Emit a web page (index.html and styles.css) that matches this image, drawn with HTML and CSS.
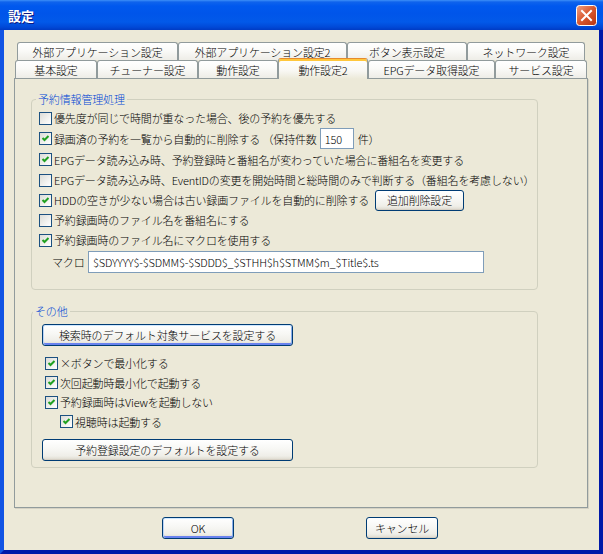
FILE: index.html
```html
<!DOCTYPE html>
<html lang="ja">
<head>
<meta charset="utf-8">
<title>設定</title>
<link rel="stylesheet" href="styles.css">
</head>
<body>
<div class="window">
  <div class="titlebar">
    <span class="title">設定</span>
    <span class="close">
      <svg width="21" height="21" viewBox="0 0 21 21">
        <defs>
          <linearGradient id="cg" x1="0" y1="0" x2="1" y2="1">
            <stop offset="0" stop-color="#f0a285"/>
            <stop offset="0.5" stop-color="#d9572e"/>
            <stop offset="1" stop-color="#b83410"/>
          </linearGradient>
        </defs>
        <rect x="0.5" y="0.5" width="20" height="20" rx="3" ry="3" fill="url(#cg)" stroke="#ffffff"/>
        <path d="M6 6 L15 15 M15 6 L6 15" stroke="#ffffff" stroke-width="2" stroke-linecap="square"/>
      </svg>
    </span>
  </div>
  <div class="client">
    <div class="tabs">
      <div class="tabrow back">
        <div class="tab w161">外部アプリケーション設定</div>
        <div class="tab w169">外部アプリケーション設定2</div>
        <div class="tab w120">ボタン表示設定</div>
        <div class="tab w118">ネットワーク設定</div>
      </div>
      <div class="tabrow front">
        <div class="tab w82">基本設定</div>
        <div class="tab w101">チューナー設定</div>
        <div class="tab w80">動作設定</div>
        <div class="tab w90 sel">動作設定2</div>
        <div class="tab w127">EPGデータ取得設定</div>
        <div class="tab w92">サービス設定</div>
      </div>
    </div>
    <div class="panel">
      <fieldset class="group g1">
        <legend>予約情報管理処理</legend>
        <div class="gbody b1">
          <div class="row"><span class="cb"></span><span>優先度が同じで時間が重なった場合、後の予約を優先する</span></div>
          <div class="row tall"><span class="cb on"><svg width="11" height="11" viewBox="0 0 11 11"><path d="M2.5 5 L4.5 7 L8.5 3" fill="none" stroke="#21a121" stroke-width="2"/></svg></span><span>録画済の予約を一覧から自動的に削除する （保持件数</span><span class="num">150</span><span>件）</span></div>
          <div class="row tall"><span class="cb on"><svg width="11" height="11" viewBox="0 0 11 11"><path d="M2.5 5 L4.5 7 L8.5 3" fill="none" stroke="#21a121" stroke-width="2"/></svg></span><span>EPGデータ読み込み時、予約登録時と番組名が変わっていた場合に番組名を変更する</span></div>
          <div class="row"><span class="cb"></span><span>EPGデータ読み込み時、EventIDの変更を開始時間と総時間のみで判断する（番組名を考慮しない）</span></div>
          <div class="row"><span class="cb on"><svg width="11" height="11" viewBox="0 0 11 11"><path d="M2.5 5 L4.5 7 L8.5 3" fill="none" stroke="#21a121" stroke-width="2"/></svg></span><span class="hddlabel">HDDの空きが少ない場合は古い録画ファイルを自動的に削除する</span><span class="btn b89">追加削除設定</span></div>
          <div class="row"><span class="cb"></span><span>予約録画時のファイル名を番組名にする</span></div>
          <div class="row"><span class="cb on"><svg width="11" height="11" viewBox="0 0 11 11"><path d="M2.5 5 L4.5 7 L8.5 3" fill="none" stroke="#21a121" stroke-width="2"/></svg></span><span>予約録画時のファイル名にマクロを使用する</span></div>
          <div class="macro"><span class="mlabel">マクロ</span><span class="text">$SDYYYY$-$SDMM$-$SDDD$_$STHH$h$STMM$m_$Title$.ts</span></div>
        </div>
      </fieldset>
      <fieldset class="group g2">
        <legend>その他</legend>
        <div class="gbody b2">
          <span class="btn wide focus">検索時のデフォルト対象サービスを設定する</span>
          <div class="rows2">
            <div class="row r20"><span class="cb on"><svg width="11" height="11" viewBox="0 0 11 11"><path d="M2.5 5 L4.5 7 L8.5 3" fill="none" stroke="#21a121" stroke-width="2"/></svg></span><span>×ボタンで最小化する</span></div>
            <div class="row r19"><span class="cb on"><svg width="11" height="11" viewBox="0 0 11 11"><path d="M2.5 5 L4.5 7 L8.5 3" fill="none" stroke="#21a121" stroke-width="2"/></svg></span><span>次回起動時最小化で起動する</span></div>
            <div class="row r20"><span class="cb on"><svg width="11" height="11" viewBox="0 0 11 11"><path d="M2.5 5 L4.5 7 L8.5 3" fill="none" stroke="#21a121" stroke-width="2"/></svg></span><span>予約録画時はViewを起動しない</span></div>
            <div class="row r19 indent"><span class="cb on"><svg width="11" height="11" viewBox="0 0 11 11"><path d="M2.5 5 L4.5 7 L8.5 3" fill="none" stroke="#21a121" stroke-width="2"/></svg></span><span>視聴時は起動する</span></div>
          </div>
          <span class="btn wide">予約登録設定のデフォルトを設定する</span>
        </div>
      </fieldset>
    </div>
    <div class="footer">
      <span class="btn b72 focus">OK</span>
      <span class="btn b72 cancel">キャンセル</span>
    </div>
  </div>
</div>
</body>
</html>
```

FILE: styles.css
```css
* { box-sizing: border-box; }
html, body { margin: 0; padding: 0; }
body {
  width: 603px;
  height: 554px;
  overflow: hidden;
  font-family: "Noto Sans CJK JP", "Noto Sans", sans-serif;
  font-size: 11px;
  font-weight: 300;
  letter-spacing: -0.15px;
  color: #000;
  background: #ffffff;
}
.window {
  width: 603px;
  height: 554px;
  display: flex;
  flex-direction: column;
  background: #0831d9;
}
.titlebar {
  height: 30px;
  flex: none;
  display: flex;
  align-items: center;
  justify-content: space-between;
  padding: 0 6px 0 8px;
  background: linear-gradient(to bottom, #3d8ff8 0px, #0f63ec 2px, #0058ee 6px, #0055ea 14px, #0259e9 22px, #0049d8 27px, #003bc4 30px);
}
.title {
  color: #fff;
  font-weight: bold;
  font-size: 13px;
  line-height: 16px;
  letter-spacing: 0;
  text-shadow: 1px 1px 0 #0a1883;
  margin-top: 1px;
}
.close {
  width: 21px;
  height: 21px;
  display: block;
  margin-top: 1px;
}
.close svg { display: block; }
.client {
  flex: 1;
  background: #ece9d8;
  border-left: 4px solid #1154e4;
  border-right: 4px solid #0019a8;
  border-bottom: 4px solid #0019a8;
}
.tabs { margin-top: 12px; }
.tabrow { display: flex; height: 18px; }
.tabrow.back { padding-left: 13px; }
.tabrow.front { padding-left: 11px; align-items: flex-end; }
.tab {
  height: 18px;
  flex: none;
  border: 1px solid #919b9c;
  border-bottom: none;
  border-radius: 3px 3px 0 0;
  background: linear-gradient(to bottom, #ffffff 0%, #fbfbf9 40%, #eeede7 100%);
  display: flex;
  align-items: center;
  justify-content: center;
  font-size: 11px;
  line-height: 14px;
  white-space: nowrap;
}
.tab.sel {
  height: 21px;
  margin-bottom: -1px;
  position: relative;
  z-index: 2;
  border-top: 1px solid #e68b2c;
  box-shadow: inset 0 2px 0 #ffc73c;
  background: linear-gradient(to bottom, #ffffff 0%, #f8f7f3 60%, #ece9d8 100%);
  padding-top: 1px;
}
.w161 { width: 161px; }
.w169 { width: 169px; }
.w120 { width: 120px; }
.w118 { width: 118px; }
.w82 { width: 82px; }
.w101 { width: 101px; }
.w80 { width: 80px; }
.w90 { width: 90px; }
.w127 { width: 127px; }
.w92 { width: 92px; }

.panel {
  margin-left: 10px;
  width: 574px;
  height: 430px;
  border: 1px solid #919b9c;
  box-shadow: 1px 1px 0 #d5d2c4;
  background: #ece9d8;
  padding: 13px 0 0 16px;
}
.group {
  margin: 0;
  padding: 0;
  width: 507px;
  border: 1px solid #d0d0bf;
  border-radius: 4px;
  min-width: 0;
}
.group legend {
  margin-left: 4px;
  padding: 0 2px;
  color: #0046d5;
  font-size: 11px;
  line-height: 14px;
}
.g2 { margin-top: 14px; }
.g2 legend { margin-left: 1px; }
.b1 { padding: 2px 0 16px 7px; }
.b2 { padding: 6px 0 6px 10px; }
.row {
  display: flex;
  align-items: center;
  height: 20px;
  white-space: nowrap;
}
.row.tall { height: 21px; }
.row.r20 { height: 20px; }
.row.r19 { height: 19px; }
.rows2 { margin: 7px 0 8px 3px; }
.row.indent { padding-left: 15px; }
.cb {
  width: 13px;
  height: 13px;
  flex: none;
  border: 1px solid #1c5180;
  background: linear-gradient(135deg, #dcdcd7 0%, #f2f2ef 60%, #ffffff 100%);
  margin-right: 2px;
  display: flex;
  align-items: center;
  justify-content: center;
}
.cb svg { display: block; }
.num {
  width: 34px;
  height: 21px;
  flex: none;
  border: 1px solid #7f9db9;
  background: #fff;
  margin: 0 4px 0 3px;
  padding-left: 4px;
  display: flex;
  align-items: center;
}
.hddlabel { width: 321px; flex: none; }
.btn {
  height: 22px;
  flex: none;
  border: 1px solid #003c74;
  border-radius: 3px;
  background: linear-gradient(to bottom, #ffffff 0%, #f7f7f4 45%, #efeee8 80%, #dcd8cc 100%);
  box-shadow: inset 0 -1px 0 #d6d0c5;
  display: flex;
  align-items: center;
  justify-content: center;
  font-size: 11px;
  white-space: nowrap;
}
.btn.focus {
  box-shadow: inset 0 1px 0 #cee7ff, inset 1px 0 0 #bcd4f6, inset -1px 0 0 #89adeb, inset 0 -2px 0 #6982ee;
}
.b89 { width: 89px; height: 21px; }
.btn.wide { width: 251px; }
.b72 { width: 72px; }
.macro {
  display: flex;
  align-items: center;
  height: 22px;
  margin-top: 1px;
  padding-left: 13px;
}
.mlabel { width: 36px; flex: none; }
.text {
  width: 396px;
  height: 22px;
  border: 1px solid #7f9db9;
  background: #fff;
  padding-left: 4px;
  display: flex;
  align-items: center;
  white-space: nowrap;
}
.footer {
  display: flex;
  margin-top: 9px;
  padding-left: 158px;
}
.cancel { margin-left: 132px; }
```
